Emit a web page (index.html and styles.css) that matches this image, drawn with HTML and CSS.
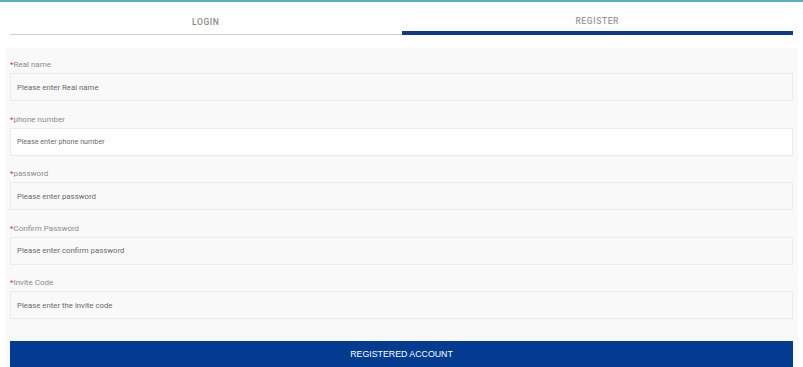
FILE: index.html
```html
<!DOCTYPE html>
<html lang="en">
<head>
    <meta charset="UTF-8">
    <meta name="viewport" content="width=device-width, initial-scale=1.0">
    <title>Register</title>
    <link rel="stylesheet" href="styles.css">
</head>
<body>
    <div class="page">
        <div class="tabs">
            <div class="tab">LOGIN</div>
            <div class="tab active">REGISTER</div>
        </div>
        <form class="panel">
            <div class="field">
                <label><span class="req">*</span>Real name</label>
                <input type="text" placeholder="Please enter Real name">
            </div>
            <div class="field">
                <label><span class="req">*</span>phone number</label>
                <input type="text" class="small" placeholder="Please enter phone number">
            </div>
            <div class="field">
                <label><span class="req">*</span>password</label>
                <input type="password" placeholder="Please enter password">
            </div>
            <div class="field">
                <label><span class="req">*</span>Confirm Password</label>
                <input type="password" placeholder="Please enter confirm password">
            </div>
            <div class="field">
                <label><span class="req">*</span>Invite Code</label>
                <input type="text" placeholder="Please enter the invite code">
            </div>
            <div class="button">REGISTERED ACCOUNT</div>
        </form>
    </div>
</body>
</html>
```

FILE: styles.css
```css
body {
    margin: 0;
    font-family: Roboto, "Liberation Sans", sans-serif;
    background: #fff;
}
.page {
    border-top: 2px solid #5aaebd;
}
.tabs {
    display: flex;
    padding: 0 10px;
}
.tab {
    flex: 1;
    height: 32px;
    line-height: 40px;
    text-align: center;
    font-size: 8.5px;
    font-weight: 500;
    letter-spacing: 0.6px;
    color: #8a8a8a;
    border-bottom: 1px solid #cfcfcf;
}
.tab.active {
    line-height: 38px;
    height: 29px;
    border-bottom: 4px solid #0d3a8a;
    color: #9a9a9a;
}
.panel {
    margin: 13px 5px 0;
    padding: 10px 5px 0;
    background: #f9f9f9;
}
.field {
    margin-bottom: 11.5px;
}
.field label {
    display: block;
    height: 12px;
    line-height: 12px;
    padding-top: 1px;
    margin-bottom: 2px;
    font-size: 8px;
    color: #8c8c8c;
}
.req {
    color: #e0283c;
}
.field input {
    display: block;
    box-sizing: border-box;
    width: 100%;
    height: 28px;
    margin: 0;
    padding: 0 6px;
    border: 1px solid #ececec;
    background: #f9f9f9;
    font-family: inherit;
    font-size: 7.8px;
    color: #555;
    outline: none;
}
.field input::placeholder {
    color: #6a6a6a;
}
.field input.small {
    background: #fff;
    font-size: 7.2px;
}
.button {
    margin-top: 22px;
    height: 26px;
    line-height: 26px;
    background-color: #023b90;
    color: #fff;
    text-align: center;
    font-family: "Liberation Sans", Arial, sans-serif;
    font-size: 8.8px;
    cursor: pointer;
}
```
